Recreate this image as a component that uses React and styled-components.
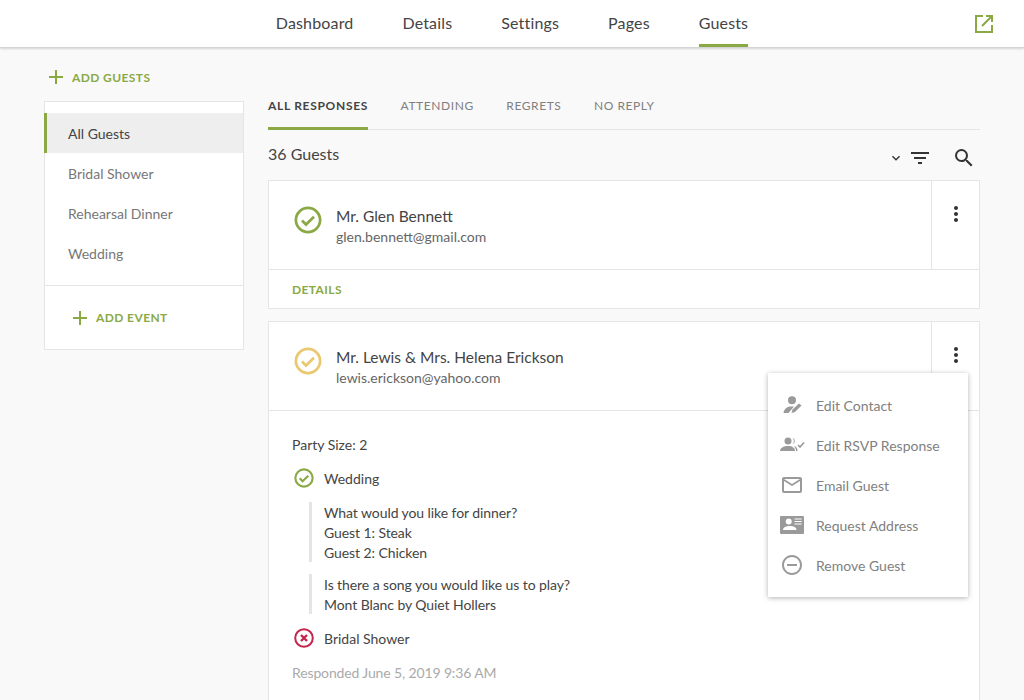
import React from "react";
import styled, { createGlobalStyle } from "styled-components";
import { MdFilterList, MdSearch, MdMoreVert, MdAdd, MdKeyboardArrowDown, MdMailOutline, MdRemoveCircleOutline } from "react-icons/md";

const Global = createGlobalStyle`
  html, body { margin: 0; padding: 0; height: 700px; overflow: hidden; background: #f9f9f9; }
  body { font-family: Lato, "Noto Sans", sans-serif; color: #444; }
  * { box-sizing: border-box; }
`;
const green = "#8aa945";
const Header = styled.header`
  height: 48px; background: #fff; border-bottom: 1px solid #d4d4d4; box-shadow: 0 1px 2px rgba(0,0,0,.15);
  display: flex; justify-content: center; gap: 49px; position: relative;
`;
const NavItem = styled.a`
  height: 47px; padding-top: 12px; font-size: 16px; line-height: 22px; letter-spacing: .16px; color: #444;
  border-bottom: ${p => (p.$active ? `3px solid ${green}` : "3px solid transparent")};
`;
const External = styled.span`
  position: absolute; right: 28px; top: 12px; color: ${green}; display: flex;
`;
const Page = styled.div`
  display: grid; grid-template-columns: 200px 712px; column-gap: 24px; padding: 0 44px; height: 652px; overflow: hidden;
`;
const Side = styled.aside`padding-top: 11px;`;
const AddGuests = styled.div`
  height: 36px; margin-bottom: 6px; display: flex; align-items: center; gap: 4px; color: ${green};
  font-size: 12px; font-weight: 700; letter-spacing: .4px;
`;
const SidePanel = styled.div`
  background: #fff; border: 1px solid #e5e5e5; padding-top: 11px;
`;
const SideItem = styled.div`
  height: 40px; display: flex; align-items: center; font-size: 14px; padding-left: ${p => (p.$active ? "21px" : "23px")};
  margin-left: ${p => (p.$active ? "-1px" : "0")};
  color: ${p => (p.$active ? "#444" : "#777")};
  background: ${p => (p.$active ? "#eeeeee" : "transparent")};
  border-left: ${p => (p.$active ? `3px solid ${green}` : "0")};
`;
const SideFoot = styled.div`
  margin-top: 12px; border-top: 1px solid #e5e5e5; height: 64px; padding-left: 23px;
  display: flex; align-items: center; gap: 4px; color: ${green}; font-size: 12px; font-weight: 700; letter-spacing: .4px;
`;
const Main = styled.main`padding-top: 50px;`;
const Tabs = styled.div`
  display: flex; gap: 32.5px; height: 32px; border-bottom: 1px solid #e5e5e5;
`;
const Tab = styled.div`
  height: 32px; line-height: 16px; font-size: 12px; letter-spacing: ${p => (p.$active ? ".7px" : ".58px")}; font-weight: ${p => (p.$active ? 700 : 400)};
  color: ${p => (p.$active ? "#444" : "#808080")};
  border-bottom: ${p => (p.$active ? `3px solid ${green}` : "0")};
`;
const CountRow = styled.div`
  height: 50px; display: flex; align-items: center; justify-content: space-between; font-size: 16px; color: #444;
`;
const Count = styled.span`padding-bottom: 4px;`;
const Tools = styled.div`
  display: flex; align-items: center; color: #333; padding: 6px 4px 0 0;
`;
const FilterWrap = styled.span`display: flex; margin: 0 20px 0 4px;`;
const Card = styled.section`
  position: relative; background: #fff; border: 1px solid #e5e5e5; margin-bottom: 12px;
`;
const Top = styled.div`
  height: 89px; display: flex; border-bottom: 1px solid #e5e5e5;
`;
const Person = styled.div`
  flex: 1; display: flex; align-items: flex-start; gap: 14px; padding: 24px 0 0 25px;
`;
const StatusIcon = styled.span`display: flex; margin-top: 1px;`;
const Name = styled.div`font-size: 15.5px; line-height: 22px; color: #444;`;
const Email = styled.div`font-size: 14px; line-height: 20px; color: #666;`;
const Kebab = styled.div`
  width: 48px; border-left: 1px solid #e5e5e5; display: flex; justify-content: center; padding-top: 21px; color: #333;
`;
const Foot = styled.div`
  height: 38px; padding-left: 23px; display: flex; align-items: center; color: ${green}; font-size: 12px; letter-spacing: .4px; font-weight: 700;
`;
const Body = styled.div`padding: 24px 23px 17px; font-size: 14px; color: #444;`;
const Line = styled.div`line-height: 20px;`;
const Event = styled.div`
  display: flex; align-items: center; gap: 10px; height: 24px; padding: 0 0 2px 2px; margin-top: ${p => (p.$last ? "13px" : "12px")};
`;
const Answer = styled.div`
  height: ${p => p.$lines * 20}px; padding: 1px 0 0 12px;
  margin: ${p => (p.$first ? "11px" : "12px")} 0 0 17px; border-left: 3px solid #e5e5e5; line-height: 20px; letter-spacing: -.08px; color: #444;
`;
const Responded = styled.div`margin-top: 12px; line-height: 20px; letter-spacing: -.13px; color: #aaa;`;
const Menu = styled.div`
  position: absolute; top: 51px; left: 499px; width: 200px; height: 224px; background: #fff; padding: 12px 0;
  box-shadow: 0 1px 5px rgba(0,0,0,.3); z-index: 2;
`;
const MenuItem = styled.div`
  height: 40px; display: flex; align-items: center; color: #7f7f7f; font-size: 14px;
`;
const MenuIcon = styled.span`
  width: 48px; display: flex; justify-content: center; color: #9a9a9a;
`;

const CheckCircle = ({ size = 28, color = green, sw = 2.7 }) => (
  <svg width={size} height={size} viewBox="0 0 28 28" fill="none">
    <circle cx="14" cy="14" r="12.1" stroke={color} strokeWidth={sw} />
    <path d="M8 14.500l4 4L20 10.800" stroke={color} strokeWidth={sw} />
  </svg>
);
const XCircle = () => (
  <svg width="20" height="20" viewBox="0 0 20 20" fill="none">
    <circle cx="10" cy="10" r="8.800" stroke="#c2274b" strokeWidth="2" />
    <path d="M7 7l6 6M13 7l-6 6" stroke="#c2274b" strokeWidth="2.400" />
  </svg>
);
const ExternalIcon = () => (
  <svg width="24" height="24" viewBox="0 0 24 24" fill="none" stroke="currentColor" strokeWidth="2">
    <path d="M11 4H4V20H20V13" />
    <path d="M20 4L10 14M14 4H20V10" />
  </svg>
);
const EditContact = () => (
  <svg width="24" height="24" viewBox="0 0 24 24" fill="currentColor">
    <circle cx="12" cy="7.300" r="4" />
    <path d="M3.500 20C4 16 7 13.500 11 13.500h3L8.500 20z" />
    <path d="M11.500 20l1-3.500L19 10.500l2.500 2-6.500 6.500z" />
  </svg>
);
const EditRsvp = () => (
  <svg width="26" height="24" viewBox="0 0 26 24" fill="currentColor">
    <circle cx="9" cy="8" r="3.500" />
    <path d="M1 18c0-3 3.500-5 8-5s7 2 7 5z" />
    <path d="M13.500 4.700a3.500 3.500 0 0 1 0 6.600 5 5 0 0 0 0-6.600zM15 13c2.500.5 3.500 2.200 3.500 5h-1.500c0-1.800-.6-3.500-2-5z" />
    <path d="M19 12l2 2 4-4.500" fill="none" stroke="currentColor" strokeWidth="1.700" />
  </svg>
);
const IdCard = () => (
  <svg width="26" height="24" viewBox="0 0 26 24" fill="currentColor">
    <path fillRule="evenodd" d="M2 3h22a1 1 0 0 1 1 1v16a1 1 0 0 1-1 1H2a1 1 0 0 1-1-1V4a1 1 0 0 1 1-1zM12.700 8.500a3 3 0 1 0-6 0 3 3 0 0 0 6 0zM4 17h13.500c0-2.600-3-4-6.700-4S4 14.400 4 17zM15.500 5.500v1h7.200v-1zM15.500 8v1h7.200V8zM15.500 10.500v1h7.200v-1z" />
  </svg>
);

export default function App() {
  return (
    <>
      <Global />
      <Header>
        <NavItem>Dashboard</NavItem>
        <NavItem>Details</NavItem>
        <NavItem>Settings</NavItem>
        <NavItem>Pages</NavItem>
        <NavItem $active>Guests</NavItem>
        <External><ExternalIcon /></External>
      </Header>
      <Page>
        <Side>
          <AddGuests><MdAdd size={24} />ADD GUESTS</AddGuests>
          <SidePanel>
            <SideItem $active>All Guests</SideItem>
            <SideItem>Bridal Shower</SideItem>
            <SideItem>Rehearsal Dinner</SideItem>
            <SideItem>Wedding</SideItem>
            <SideFoot><MdAdd size={24} />ADD EVENT</SideFoot>
          </SidePanel>
        </Side>
        <Main>
          <Tabs>
            <Tab $active>ALL RESPONSES</Tab>
            <Tab>ATTENDING</Tab>
            <Tab>REGRETS</Tab>
            <Tab>NO REPLY</Tab>
          </Tabs>
          <CountRow>
            <Count>36 Guests</Count>
            <Tools>
              <MdKeyboardArrowDown size={16} />
              <FilterWrap><MdFilterList size={24} /></FilterWrap>
              <MdSearch size={24} />
            </Tools>
          </CountRow>
          <Card>
            <Top>
              <Person>
                <StatusIcon><CheckCircle /></StatusIcon>
                <div>
                  <Name>Mr. Glen Bennett</Name>
                  <Email>glen.bennett@gmail.com</Email>
                </div>
              </Person>
              <Kebab><MdMoreVert size={24} /></Kebab>
            </Top>
            <Foot>DETAILS</Foot>
          </Card>
          <Card>
            <Top>
              <Person>
                <StatusIcon><CheckCircle color="#e9c870" /></StatusIcon>
                <div>
                  <Name>Mr. Lewis &amp; Mrs. Helena Erickson</Name>
                  <Email>lewis.erickson@yahoo.com</Email>
                </div>
              </Person>
              <Kebab><MdMoreVert size={24} /></Kebab>
            </Top>
            <Body>
              <Line>Party Size: 2</Line>
              <Event><CheckCircle size={20} sw={3} />Wedding</Event>
              <Answer $first $lines={3}>
                What would you like for dinner?<br />Guest 1: Steak<br />Guest 2: Chicken
              </Answer>
              <Answer $lines={2}>
                Is there a song you would like us to play?<br />Mont Blanc by Quiet Hollers
              </Answer>
              <Event $last><XCircle />Bridal Shower</Event>
              <Responded>Responded June 5, 2019 9:36 AM</Responded>
            </Body>
            <Menu>
              <MenuItem><MenuIcon><EditContact /></MenuIcon>Edit Contact</MenuItem>
              <MenuItem><MenuIcon><EditRsvp /></MenuIcon>Edit RSVP Response</MenuItem>
              <MenuItem><MenuIcon><MdMailOutline size={24} /></MenuIcon>Email Guest</MenuItem>
              <MenuItem><MenuIcon><IdCard /></MenuIcon>Request Address</MenuItem>
              <MenuItem><MenuIcon><MdRemoveCircleOutline size={24} /></MenuIcon>Remove Guest</MenuItem>
            </Menu>
          </Card>
        </Main>
      </Page>
    </>
  );
}
